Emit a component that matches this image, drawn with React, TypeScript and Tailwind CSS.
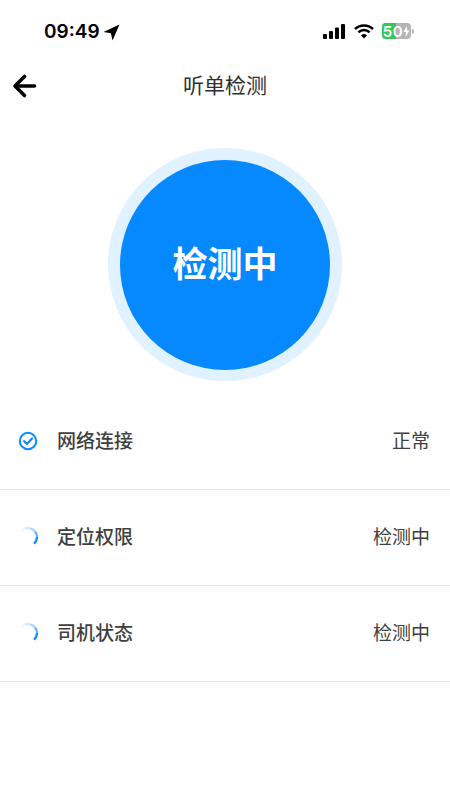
const cjk = "font-['Inter','Noto_Sans_CJK_SC',sans-serif]";

function Spinner() {
  return (
    <svg width="20" height="20" viewBox="0 0 20 20" fill="none" strokeWidth="2.2">
      <path d="M3.5 3.9 A9 9 0 0 1 7 1.5" stroke="#eef7ff" />
      <path d="M7 1.5 A9 9 0 0 1 12 1.3" stroke="#cfe8ff" />
      <path d="M12 1.3 A9 9 0 0 1 17 4.5" stroke="#a3d4ff" />
      <path d="M17 4.5 A9 9 0 0 1 19 10" stroke="#5db4ff" />
      <path d="M19 10 A9 9 0 0 1 16 16.7" stroke="#0a8cff" />
    </svg>
  );
}

function Check() {
  return (
    <svg width="20" height="20" viewBox="0 0 20 20" fill="none" stroke="#0a8cff">
      <circle cx="10" cy="10" r="8.2" strokeWidth="2" />
      <path d="M6.1 10.2 L9 12.9 L14 7.4" strokeWidth="2.2" strokeLinecap="round" strokeLinejoin="round" />
    </svg>
  );
}

function Row({ icon, label, value }: { icon: React.ReactNode; label: string; value: string }) {
  return (
    <div className="flex h-[96px] items-center justify-between border-b border-[#e4e4e4] pl-[18px] pr-[20px]">
      <div className="flex items-center gap-[19px]">
        <div className="-translate-y-[1px]">{icon}</div>
        <span className="pt-[2px] text-[19px] font-medium text-[#3f3f41]">{label}</span>
      </div>
      <span className="pt-[2px] text-[19px] font-normal text-[#3f3f41]">{value}</span>
    </div>
  );
}

export default function App() {
  return (
    <div className={`h-[800px] w-[450px] overflow-hidden bg-white ${cjk}`}>
      <div className="flex h-[64px] items-center justify-between pl-[44px] pr-[36px]">
        <div className="flex items-center gap-[3px]">
          <span className="font-['Inter'] text-[19px] font-semibold text-black">09:49</span>
          <svg width="17" height="17" viewBox="0 0 16 16" fill="#000">
            <path d="M15.5 0.5 L0.5 7.5 L7.4 8.6 L9 15.5 Z" />
          </svg>
        </div>
        <div className="flex -translate-y-[1px] items-center gap-[8px]">
          <svg width="23" height="15" viewBox="0 0 23 15" fill="#000">
            <rect x="0" y="10" width="4" height="5" rx="1" />
            <rect x="6" y="7" width="4" height="8" rx="1" />
            <rect x="12" y="3.5" width="4" height="11.5" rx="1" />
            <rect x="18" y="0" width="4" height="15" rx="1" />
          </svg>
          <svg width="20" height="15" viewBox="0 0 20 15" fill="none" stroke="#000" strokeWidth="2.5">
            <path d="M1 5 A13 13 0 0 1 19 5" />
            <path d="M4.4 8.3 A8.2 8.2 0 0 1 15.6 8.3" />
            <path d="M10 14.6 L7 11.4 A4.3 4.3 0 0 1 13 11.4 Z" fill="#000" stroke="none" />
          </svg>
          <div className="relative flex h-[16px] w-[29px] items-center justify-center overflow-hidden rounded-[4px] bg-[#b5b5b5]">
            <div className="absolute bottom-0 left-0 top-0 w-[14px] bg-[#34c759]" />
            <span className="relative font-['Inter'] text-[15px] font-semibold leading-none tracking-[0.5px] text-white">50</span>
            <svg className="relative" width="7" height="11" viewBox="0 0 7 11" fill="#fff">
              <path d="M4 0 L0.5 6 H3 L2.5 11 L6.5 4.5 H4 Z" />
            </svg>
          </div>
          <div className="-ml-[7px] h-[5px] w-[2px] rounded-r-[2px] bg-[#b5b5b5]" />
        </div>
      </div>

      <div className="relative flex h-[44px] items-center justify-center">
        <svg className="absolute left-[12px] top-[9px]" width="26" height="26" viewBox="0 0 26 26" fill="none" stroke="#000" strokeWidth="3.6" strokeLinecap="round" strokeLinejoin="round">
          <path d="M22.5 13 H4" />
          <path d="M12.5 3.5 L3 13 L12.5 22.5" />
        </svg>
        <span className="text-[21px] font-normal text-[#2f2f31]">听单检测</span>
      </div>

      <div className="mt-[40px] flex justify-center">
        <div className="flex h-[233px] w-[234px] items-center justify-center rounded-full bg-[#e0f1ff]">
          <div className="flex h-[210px] w-[210px] items-center justify-center rounded-full bg-[#0688ff]">
            <span className="text-[35px] font-semibold text-white">检测中</span>
          </div>
        </div>
      </div>

      <div className="mt-[13px]">
        <Row icon={<Check />} label="网络连接" value="正常" />
        <Row icon={<Spinner />} label="定位权限" value="检测中" />
        <Row icon={<Spinner />} label="司机状态" value="检测中" />
      </div>
    </div>
  );
}
